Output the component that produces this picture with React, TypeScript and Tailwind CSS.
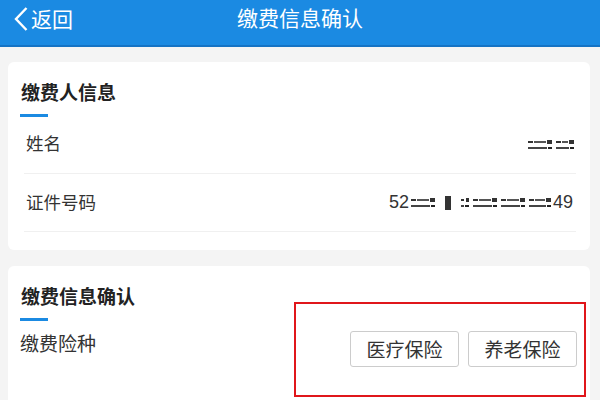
import React from "react";

const font = { fontFamily: '"Noto Sans CJK SC", "Noto Sans", sans-serif' };

function Mask({ w }: { w: number }) {
  return (
    <span className="inline-flex flex-col justify-center gap-[3px] mx-[2px] align-middle" style={{ width: w }}>
      <span className="flex items-center gap-[1px]">
        <span className="h-[2px] w-[5px] bg-[#333]" />
        <span className="h-[2px] flex-1 bg-[#555]" />
        <span className="h-[4px] w-[5px] bg-[#333]" />
      </span>
      <span className="flex items-center gap-[1px]">
        <span className="h-[2px] flex-1 bg-[#444]" />
        <span className="h-[2px] w-[4px] bg-[#222]" />
      </span>
    </span>
  );
}

export default function App() {
  return (
    <div className="w-[600px] h-[400px] overflow-hidden bg-[#f4f4f4] relative" style={font}>
      <div className="h-[47px] bg-[#1b8ae2] border-b-[2px] border-[#1573c4] flex items-center relative">
        <div className="absolute left-[13px] top-0 h-[37px] flex items-center text-white text-[21px]">
          <svg width="16" height="28" viewBox="0 0 16 28" className="mr-[2px]">
            <path d="M13.5 3 L3 14 L13.5 25" fill="none" stroke="white" strokeWidth="2.4" />
          </svg>
          <span>返回</span>
        </div>
        <div className="flex-1 text-center text-white text-[21px] -mt-[10px]">缴费信息确认</div>
      </div>

      <div className="mx-[8px] mt-[15px] w-[582px] h-[188px] bg-white rounded-[6px] pt-[16px] px-[13px]">
        <div className="text-[19px] font-bold text-[#222] leading-[28px]">缴费人信息</div>
        <div className="w-[28px] h-[3px] bg-[#1b8ae2] mt-[8px] -ml-[1px]" />
        <div className="ml-[3px] mr-[1px]">
          <div className="h-[57px] flex items-center justify-between border-b border-[#f0f0f0]">
            <span className="text-[17.5px] text-[#333] ml-[2px] -mt-[4px]">姓名</span>
            <span className="flex items-center -mt-[2px]">
              <Mask w={24} />
              <Mask w={18} />
            </span>
          </div>
          <div className="h-[58px] flex items-center justify-between border-b border-[#f0f0f0]">
            <span className="text-[17.5px] text-[#333] ml-[2px]">证件号码</span>
            <span className="flex items-center text-[18px] text-[#333] mr-[3px]" style={{ fontFamily: '"Liberation Sans", sans-serif' }}>
              52
              <Mask w={24} />
              <span className="w-[6px] h-[14px] bg-[#333] mx-[8px]" />
              <Mask w={8} />
              <Mask w={24} />
              <Mask w={24} />
              <Mask w={22} />
              49
            </span>
          </div>
        </div>
      </div>

      <div className="mx-[8px] mt-[16px] w-[582px] h-[200px] bg-white rounded-[6px] pt-[16px] px-[13px]">
        <div className="text-[19px] font-bold text-[#222] leading-[28px]">缴费信息确认</div>
        <div className="w-[28px] h-[3px] bg-[#1b8ae2] mt-[8px] -ml-[1px]" />
        <div className="flex justify-between">
          <span className="text-[19px] text-[#333] mt-[8px] -ml-[1px]">缴费险种</span>
          <div className="flex gap-[9px] mt-[10px]">
            <div className="w-[109px] h-[36px] border border-[#ccc] rounded-[3px] flex items-center justify-center text-[19px] text-[#333]">医疗保险</div>
            <div className="w-[109px] h-[36px] border border-[#ccc] rounded-[3px] flex items-center justify-center text-[19px] text-[#333]">养老保险</div>
          </div>
        </div>
      </div>

      <div className="absolute left-[294px] top-[302px] w-[292px] h-[95px] border-[2px] border-[#e0161b]" />
    </div>
  );
}
